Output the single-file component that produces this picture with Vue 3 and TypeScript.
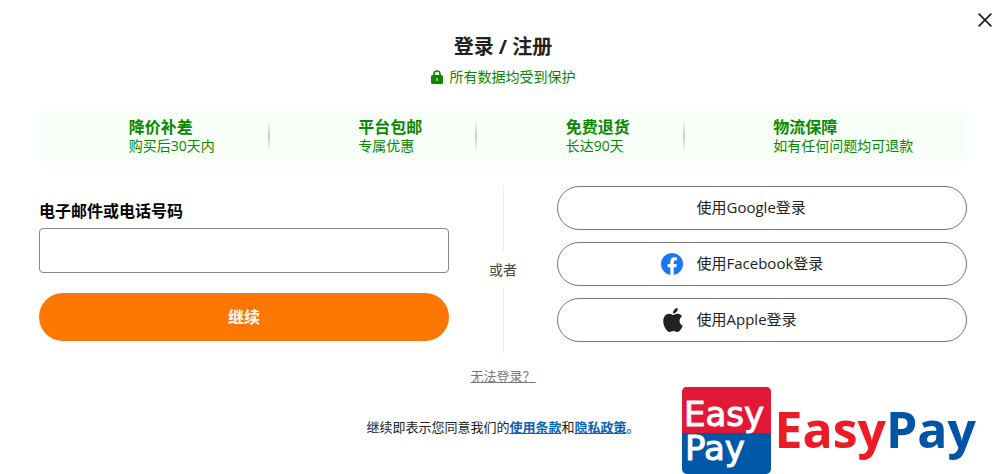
<script setup lang="ts">
import { ref } from 'vue'

interface Benefit {
  title: string
  detail: string
}

interface Provider {
  name: string
  icon: 'none' | 'facebook' | 'apple'
}

const account = ref('')

const benefits: Benefit[] = [
  { title: '降价补差', detail: '购买后30天内' },
  { title: '平台包邮', detail: '专属优惠' },
  { title: '免费退货', detail: '长达90天' },
  { title: '物流保障', detail: '如有任何问题均可退款' },
]

const providers: Provider[] = [
  { name: 'Google', icon: 'none' },
  { name: 'Facebook', icon: 'facebook' },
  { name: 'Apple', icon: 'apple' },
]
</script>

<template>
  <main class="dialog">
    <button class="close" type="button" aria-label="关闭">
      <svg viewBox="0 0 14 14" width="14" height="14" aria-hidden="true">
        <path d="M.7.7l12.6 12.6M13.3.7L.7 13.3" fill="none" stroke="#222" stroke-width="1.8" />
      </svg>
    </button>

    <header class="head">
      <h1>登录 / 注册</h1>
      <p class="secure">
        <svg viewBox="0 0 12 14" width="12" height="14" aria-hidden="true">
          <path d="M3 6V4a3 3 0 0 1 6 0v2" fill="none" stroke="#0a8800" stroke-width="1.6" />
          <rect y="5" width="12" height="9" rx="1.6" fill="#0a8800" />
          <path d="M6 8.6v1.8" stroke="#b9e0b5" stroke-width="1.4" stroke-linecap="round" />
        </svg>
        <span>所有数据均受到保护</span>
      </p>
    </header>

    <ul class="benefits">
      <li v-for="item in benefits" :key="item.title">
        <div class="benefit">
          <strong>{{ item.title }}</strong>
          <span>{{ item.detail }}</span>
        </div>
      </li>
    </ul>

    <div class="columns">
      <form class="account" @submit.prevent>
        <label for="account">电子邮件或电话号码</label>
        <input id="account" v-model="account" type="text" autocomplete="username" />
        <button class="continue" type="submit">继续</button>
      </form>

      <div class="or"><span>或者</span></div>

      <div class="providers">
        <button v-for="p in providers" :key="p.name" class="provider" type="button">
          <span class="icon">
            <svg v-if="p.icon === 'facebook'" viewBox="0 0 24 24" width="22" height="22" aria-hidden="true">
              <circle cx="12" cy="12" r="12" fill="#1877f2" />
              <path
                fill="#fff"
                d="M16.7 15.5l.5-3.5h-3.3V9.8c0-1 .5-1.9 2-1.9h1.5V5s-1.4-.3-2.7-.3c-2.7 0-4.5 1.7-4.5 4.7V12h-3v3.5h3v8.4a12 12 0 0 0 3.7 0v-8.4z"
              />
            </svg>
            <svg v-else-if="p.icon === 'apple'" viewBox="0 0 24 24" width="24" height="24" aria-hidden="true">
              <path
                fill="#222"
                d="M12.15 6.9c-.95 0-2.42-1.08-3.96-1.04-2.04.03-3.91 1.18-4.96 3.01-2.12 3.68-.55 9.1 1.52 12.09 1.01 1.45 2.21 3.09 3.79 3.04 1.52-.07 2.09-.99 3.94-.99 1.83 0 2.35.99 3.96.95 1.64-.03 2.68-1.48 3.68-2.95 1.16-1.69 1.64-3.33 1.66-3.41-.04-.01-3.18-1.22-3.22-4.86-.03-3.04 2.48-4.49 2.6-4.56-1.43-2.09-3.62-2.32-4.39-2.38-2-.16-3.68 1.09-4.61 1.09zM15.53 3.83c.84-1.01 1.4-2.43 1.25-3.83-1.21.05-2.66.81-3.53 1.82-.78.9-1.45 2.34-1.27 3.71 1.34.1 2.71-.69 3.55-1.7z"
              />
            </svg>
          </span>
          <span class="provider-name">使用{{ p.name }}登录</span>
        </button>
      </div>
    </div>

    <a class="trouble" href="#">无法登录？</a>
    <p class="terms">
      继续即表示您同意我们的<a href="#">使用条款</a>和<a href="#">隐私政策</a>。
    </p>

    <div class="brand">
      <svg class="badge" viewBox="0 0 89 87" width="89" height="87" role="img" aria-label="Easy Pay">
        <rect width="89" height="87" rx="5" fill="#0058a8" />
        <path d="M0 46V5a5 5 0 0 1 5-5h79a5 5 0 0 1 5 5v41z" fill="#e31837" />
        <g class="badge-text">
          <text x="2" y="39">Easy</text>
          <text x="3" y="73">Pay</text>
        </g>
      </svg>
      <span class="wordmark"><span class="red">Easy</span><span class="blue">Pay</span></span>
    </div>
  </main>
</template>

<style>
body {
  margin: 0;
  background: #fff;
}
</style>

<style scoped>
.dialog {
  position: relative;
  box-sizing: border-box;
  padding: 33px 39px 37px;
  color: #222;
  font-family: "Open Sans", "Noto Sans CJK SC", sans-serif;
  font-size: 14px;
  line-height: 20px;
}
button,
input {
  box-sizing: border-box;
  margin: 0;
  font-family: inherit;
}
button {
  padding: 0;
  cursor: pointer;
}
.close {
  position: absolute;
  top: 13px;
  right: 14px;
  display: flex;
  border: 0;
  background: none;
}
.head {
  display: flex;
  flex-direction: column;
  align-items: center;
  gap: 6px;
}
h1 {
  margin: 0;
  font-size: 20px;
  line-height: 28px;
  font-weight: 700;
}
.secure {
  display: flex;
  align-items: center;
  gap: 7px;
  margin: 0;
  color: #0a8800;
}
.benefits {
  display: flex;
  margin: 24px 0 0;
  padding: 0;
  list-style: none;
  background: #f7fff8;
  color: #0a8800;
}
.benefits li {
  position: relative;
  display: flex;
  flex: auto;
  justify-content: center;
  padding: 6px 0;
}
.benefits li + li::before {
  content: "";
  position: absolute;
  top: 9px;
  bottom: 9px;
  left: -1px;
  width: 2px;
  background: linear-gradient(#f7fff8, #b4d8b6 50%, #f7fff8);
}
.benefit {
  display: flex;
  flex-direction: column;
  padding-left: 36px;
  line-height: 18px;
}
.benefit strong {
  font-size: 16px;
  line-height: 20px;
}
.columns {
  display: grid;
  grid-template-columns: 1fr 108px 1fr;
  margin-top: 25px;
}
.account {
  display: flex;
  flex-direction: column;
  padding-top: 14px;
}
.account label {
  color: #000;
  font-size: 16px;
  line-height: 22px;
  font-weight: 700;
}
.account input {
  height: 45px;
  margin-top: 6px;
  padding: 0 12px;
  border: 1px solid #888;
  border-radius: 4px;
  font-size: 16px;
}
.continue {
  height: 48px;
  margin-top: 20px;
  padding-bottom: 2px;
  border: 0;
  border-radius: 24px;
  background: #fb7701;
  color: #fff;
  font-size: 16px;
  font-weight: 700;
}
.or {
  display: flex;
  flex-direction: column;
  align-items: center;
  gap: 8px;
  color: #444;
}
.or::before,
.or::after {
  content: "";
  flex: 1;
  width: 1px;
  background: #eee;
}
.providers {
  display: flex;
  flex-direction: column;
  gap: 12px;
  padding-bottom: 12px;
}
.provider {
  display: flex;
  align-items: center;
  height: 44px;
  padding-left: 25%;
  gap: 12px;
  border: 1px solid #757575;
  border-radius: 22px;
  background: #fff;
  color: #222;
  font-size: 15px;
}
.icon {
  display: flex;
  width: 24px;
}
.provider-name {
  padding-bottom: 4px;
}
.trouble {
  display: block;
  width: fit-content;
  margin: 12px auto 0;
  color: #777;
  font-size: 13px;
}
.terms {
  margin: 31px 0 0;
  text-align: center;
  font-size: 13px;
}
.terms a {
  color: #0a63b9;
  font-weight: 700;
}
.brand {
  position: absolute;
  right: 30px;
  bottom: 0;
  display: flex;
  align-items: center;
  gap: 3px;
}
.badge {
  display: block;
}
.badge-text {
  fill: #fff;
  stroke: #fff;
  stroke-width: 1px;
  font-family: "DejaVu Sans", sans-serif;
  font-size: 34px;
}
.wordmark {
  padding-bottom: 4px;
  font-size: 50px;
  line-height: 60px;
  font-weight: 700;
}
.red {
  color: #ed1c24;
}
.blue {
  color: #0054a6;
}
</style>
